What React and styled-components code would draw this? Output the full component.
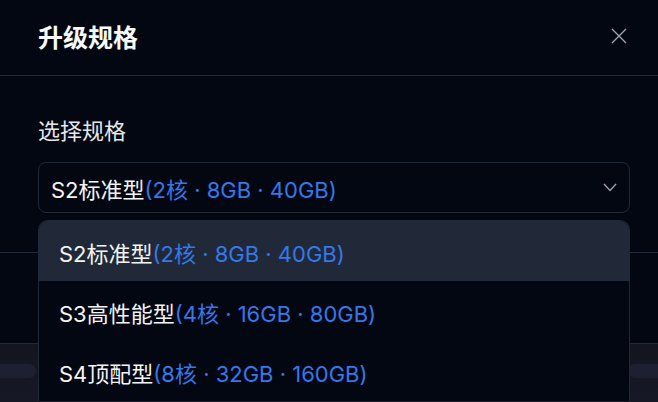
import { createGlobalStyle, styled } from "styled-components"

const GlobalStyle = createGlobalStyle`
  html, body {
    margin: 0;
    padding: 0;
    background: #030712;
    overflow: hidden;
  }
  body {
    font-family: "Inter", "Noto Sans CJK SC", sans-serif;
  }
`

const Page = styled.div`
  width: 658px;
  height: 402px;
  display: flex;
  flex-direction: column;
  background: #030712;
`

const Dialog = styled.div`
  height: 343px;
  flex-shrink: 0;
  display: flex;
  flex-direction: column;
  border-bottom: 1px solid #1f2937;
  background: #030712;
`

const Header = styled.div`
  height: 76px;
  box-sizing: border-box;
  padding: 0 31px 4px 38px;
  display: flex;
  align-items: center;
  justify-content: space-between;
  border-bottom: 1px solid #1f2937;
`

const Title = styled.h2`
  margin: 0;
  font-size: 25px;
  font-weight: 600;
  color: #f9fafb;
`

const CloseButton = styled.button`
  border: none;
  background: none;
  padding: 0;
  display: flex;
  cursor: pointer;
`

const Body = styled.div`
  padding: 40px 28px 39px 38px;
`

const Label = styled.div`
  font-size: 22px;
  line-height: 30px;
  color: #e5e7eb;
  margin-bottom: 16px;
`

const Field = styled.div`
  position: relative;
`

const SelectBox = styled.div`
  height: 51px;
  box-sizing: border-box;
  border: 1px solid #1f2937;
  border-radius: 8px;
  padding: 0 12px 0 12px;
  display: flex;
  align-items: center;
  justify-content: space-between;
`

const OptionText = styled.span`
  font-size: 22px;
  color: #f3f4f6;
  white-space: nowrap;
`

const Spec = styled.span`
  color: #3578ea;
`

const Menu = styled.div`
  position: absolute;
  top: calc(100% + 7px);
  left: 0;
  right: 0;
  border: 1px solid #1f2937;
  border-bottom: none;
  border-radius: 10px 10px 0 0;
  background: #030712;
  overflow: hidden;
  z-index: 5;
`

const MenuItem = styled.div`
  height: 60px;
  box-sizing: border-box;
  padding: 2px 20px 0;
  display: flex;
  align-items: center;
  background: ${(p) => (p.$active ? "#212939" : "transparent")};
`

const Footer = styled.div`
  flex: 1;
  border-top: 1px solid #1f2937;
`

const Backdrop = styled.div`
  flex: 1;
  background: linear-gradient(#131520, #161826);
  padding-top: 20px;
  display: flex;
  justify-content: space-between;
`

const Bar = styled.div`
  height: 14px;
  width: ${(p) => p.$w}px;
  background: #1c2031;
  border-radius: ${(p) => (p.$left ? "0 7px 7px 0" : "7px 0 0 7px")};
`

const options = [
  { name: "S2标准型", spec: "(2核 · 8GB · 40GB)" },
  { name: "S3高性能型", spec: "(4核 · 16GB · 80GB)" },
  { name: "S4顶配型", spec: "(8核 · 32GB · 160GB)" },
]

function Option({ item }) {
  return (
    <OptionText>
      {item.name}
      <Spec>{item.spec}</Spec>
    </OptionText>
  )
}

export default function App() {
  return (
    <Page>
      <GlobalStyle />
      <Dialog>
        <Header>
          <Title>升级规格</Title>
          <CloseButton>
            <svg width="16" height="16" viewBox="0 0 16 16">
              <path d="M1 1 L15 15 M15 1 L1 15" stroke="#9ca3af" strokeWidth="1.4" fill="none" />
            </svg>
          </CloseButton>
        </Header>
        <Body>
          <Label>选择规格</Label>
          <Field>
            <SelectBox>
              <Option item={options[0]} />
              <svg width="14" height="9" viewBox="0 0 14 9">
                <polyline points="1,1 7,7.5 13,1" stroke="#9ca3af" strokeWidth="1.4" fill="none" />
              </svg>
            </SelectBox>
            <Menu>
              {options.map((o, i) => (
                <MenuItem key={o.name} $active={i === 0}>
                  <Option item={o} />
                </MenuItem>
              ))}
            </Menu>
          </Field>
        </Body>
        <Footer />
      </Dialog>
      <Backdrop>
        <Bar $w={36} $left />
        <Bar $w={30} />
      </Backdrop>
    </Page>
  )
}
